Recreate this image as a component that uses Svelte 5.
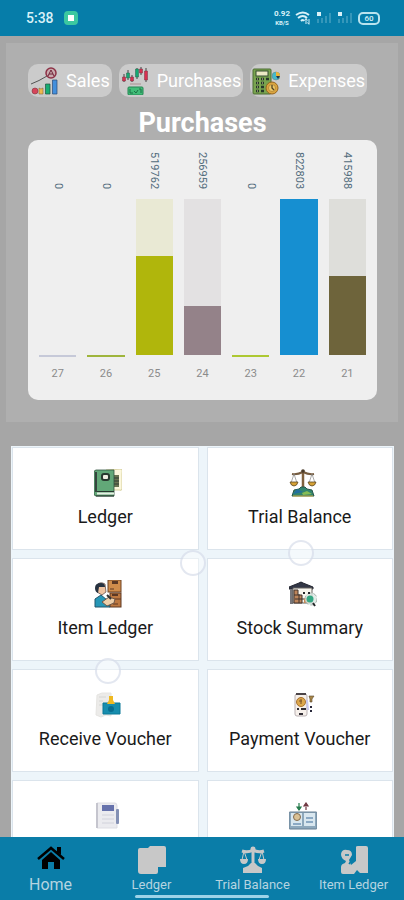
<script lang="ts">
    interface Day {
        label: string;
        value: number;
        color: string;
        track: string;
    }

    interface Entry {
        title: string;
        icon: string;
        iconOnly?: boolean;
    }

    const filters: Entry[] = [
        { title: "Sales", icon: "sales" },
        { title: "Purchases", icon: "purchases" },
        { title: "Expenses", icon: "expenses" },
    ];

    const days: Day[] = [
        { label: "27", value: 0, color: "#c6c9d8", track: "transparent" },
        { label: "26", value: 0, color: "#9fb53c", track: "transparent" },
        { label: "25", value: 519762, color: "#b0b60c", track: "#e9e9d4" },
        { label: "24", value: 256959, color: "#948289", track: "#e3e1e2" },
        { label: "23", value: 0, color: "#adc832", track: "transparent" },
        { label: "22", value: 822803, color: "#168fd1", track: "#d3e4ee" },
        { label: "21", value: 415988, color: "#6e643b", track: "#dededa" },
    ];

    const tiles: Entry[] = [
        { title: "Ledger", icon: "ledger" },
        { title: "Trial Balance", icon: "balance" },
        { title: "Item Ledger", icon: "items" },
        { title: "Stock Summary", icon: "stock" },
        { title: "Receive Voucher", icon: "receive" },
        { title: "Payment Voucher", icon: "payment" },
        { title: "Journal", icon: "journal", iconOnly: true },
        { title: "Cash Book", icon: "cashbook", iconOnly: true },
    ];

    const tabs: Entry[] = [
        { title: "Home", icon: "tab-home" },
        { title: "Ledger", icon: "tab-ledger" },
        { title: "Trial Balance", icon: "tab-balance" },
        { title: "Item Ledger", icon: "tab-items" },
    ];

    const max = Math.max(...days.map((day) => day.value));

    let selected = $state("Purchases");
    let activeTab = $state("Home");
</script>

{#snippet icon(name: string)}
    <svg class="icon" viewBox="0 0 28 28" aria-hidden="true">
        {#if name === "sales"}
            <path d="M1 17 Q9 14 17 9" fill="none" stroke="#555" />
            <circle cx="21" cy="6" r="5" fill="#c9a9ad" stroke="#8d3146" stroke-width="1.5" />
            <path d="M18 9 L21 3 L24 9 M19 7 H23" fill="none" stroke="#6f2438" />
            <circle cx="5" cy="24" r="3" fill="#d6455a" stroke="#7d3540" stroke-width=".6" />
            <path d="M9 21 l2 1 2-1 v6 h-4z" fill="#edb94d" stroke="#8d6a39" stroke-width=".6" />
            <path d="M15.500 17 h4.500 v10 h-4.500z" fill="#18ad73" stroke="#22523f" stroke-width=".7" />
            <path d="M22.500 13 h4.500 v14 h-4.500z" fill="#438fdc" stroke="#2c4b75" stroke-width=".7" />
        {:else if name === "purchases"}
            <path d="M3 7 v8 M7 3 v10 M11 8 v7 M16 1 v11 M20 0 v8 M25 1 v14" stroke="#444" />
            <path d="M1.500 10 h3 v4 h-3z M9.500 10 h3 v4 h-3z M18.500 2 h3 v4 h-3z M23.500 4 h3 v9 h-3z" fill="#d82f50" stroke="#763241" stroke-width=".5" />
            <path d="M5.500 6 h3 v5 h-3z M14.500 2 h3 v8 h-3z" fill="#15a873" stroke="#286049" stroke-width=".5" />
            <path d="M9 17 h11" stroke="#b5a5a5" stroke-width="1.500" />
            <rect x="7" y="20" width="15" height="8" rx="1" fill="#41bd78" stroke="#258552" />
            <path d="M9 22 v4 h3 M13 24 l2 2 2-3 M18 22 h2 v4" fill="none" stroke="#1d7046" />
        {:else if name === "expenses"}
            <rect x="1" y="2" width="18" height="25" rx="1" fill="#79a44f" stroke="#4d6c35" />
            <rect x="4" y="4" width="12" height="5" fill="#ece9c5" stroke="#344d30" />
            <path d="M4 12 h3 M9 12 h3 M14 12 h3 M4 16 h3 M9 16 h3 M4 20 h3 M9 20 h3 M4 24 h3 M9 24 h3" stroke="#26382a" stroke-width="2.500" />
            <path d="M5 12 h1 M10 12 h1 M5 16 h1 M10 16 h1 M5 20 h1 M5 24 h1" stroke="#e5d8a8" />
            <circle cx="24" cy="9" r="4" fill="#45b9ca" stroke="#67807e" stroke-width=".5" />
            <path d="M24 9 V5 A4 4 0 0 1 28 9z" fill="#edb437" />
            <path d="M24 9 h4 l-2 3z" fill="#263748" />
            <circle cx="20" cy="21" r="6" fill="#dba640" stroke="#97651f" />
            <circle cx="20" cy="21" r="3.500" fill="#edc869" stroke="#a0712a" stroke-width=".6" />
            <path d="M20 18 v3 l2 2" fill="none" stroke="#4e4223" stroke-width="1.300" />
        {:else if name === "ledger"}
            <path d="M12 1 L27 0 Q29 1 28 5 V20 Q28 22 25 21 H19 V3 H12z" fill="#fbf7dc" stroke="#d6cf9e" />
            <path d="M20 6 h5 v12 h-5z" fill="#6a7350" />
            <path d="M20 9 h5 M20 12 h5 M20 15 h5" stroke="#2e3d35" />
            <path d="M2 1 H20 V27 H2 Q0 27 0 24 V4 Q0 1 2 1z" fill="#62a878" stroke="#31533f" stroke-width=".8" />
            <path d="M1 3 h2 v20 h-2z" fill="#35463e" />
            <path d="M3 24.500 H20" stroke="#e8efe5" stroke-width="2" />
            <path d="M3 22.500 H20 M2 27 H20" stroke="#27372f" />
            <rect x="7" y="4" width="9" height="8" rx="3" fill="#29392f" />
            <rect x="9" y="6" width="5" height="4" rx="1" fill="#f0eee2" />
        {:else if name === "balance"}
            <path d="M14 1 V20" stroke="#80613e" stroke-width="2.500" />
            <path d="M3 5 Q8 6 14 3 Q20 6 25 5" fill="none" stroke="#765c40" stroke-width="2" />
            <path d="M5 5 L2 14 M5 5 L8 14 M23 5 L20 14 M23 5 L26 14" stroke="#878787" stroke-width=".7" />
            <path d="M1 13 H9 Q8 17 5 17 Q2 17 1 13z M19 13 H27 Q26 17 23 17 Q20 17 19 13z" fill="#d6a236" stroke="#5b4625" stroke-width=".8" />
            <path d="M10 20 L12 18 H16 L18 20 L23 21 L25 27 H3 L5 21z" fill="#32846e" stroke="#28584a" />
            <path d="M8 20 l6 3 -10 2z" fill="#226e9e" />
            <path d="M13 24 l5-2 5 3 -9 1z" fill="#86bd55" />
            <path d="M4 27 H24" stroke="#cfb64b" />
            <circle cx="14" cy="2" r="1.800" fill="#493a29" />
        {:else if name === "items"}
            <rect x="14" y="0" width="13" height="12" fill="#cf8c4b" stroke="#6e4325" />
            <rect x="16" y="13" width="11" height="14" fill="#bd7840" stroke="#5d3923" />
            <path d="M18 1 h6 v3 h-6z M18 14 h6 v2 h-6z" fill="#5b3824" />
            <path d="M16 9 h4 M18 19 h9 M19 24 h5" stroke="#5f3924" />
            <path d="M3 5 Q6 1 11 4 L12 12 L8 15 L3 12z" fill="#efc3a0" stroke="#53413d" stroke-width=".7" />
            <path d="M1 8 Q1 3 7 3 Q11 3 11 7 L5 7 L4 13 Q1 12 1 8z" fill="#263240" />
            <path d="M1 27 V19 L7 15 L13 20 L16 27z" fill="#2697b7" stroke="#23566c" />
            <path d="M8 22 L15 17 L21 19 L20 23 L13 26z" fill="#edcfaa" stroke="#6f5747" />
            <path d="M13 15 l4 4" stroke="#333" stroke-width="2" />
        {:else if name === "stock"}
            <path d="M0 9 V7 L10 3 Q12 1 14 3 L24 7 V9z" fill="#323746" stroke="#242630" />
            <path d="M1 9 H4 V24 H1z" fill="#77767a" />
            <path d="M4 8 H23 V23 H4z" fill="#f9f7ef" stroke="#65625f" />
            <path d="M5 10 h4 v5 h4 v8 h-8z" fill="#bd855b" stroke="#43332d" />
            <path d="M5 15 h6 M6 19 h10 M10 16 v7" stroke="#403531" />
            <path d="M15 18 h5 v5 h-5z" fill="#ca8b57" />
            <circle cx="22" cy="19" r="6" fill="#dce9e3" fill-opacity=".8" stroke="#a9b3ae" stroke-dasharray="4 2" />
            <circle cx="21" cy="19" r="3.500" fill="#35a783" />
            <path d="M14 13 h2 M19 13 h2 M24 23 l2 3" stroke="#24282a" stroke-width="2" />
        {:else if name === "receive"}
            <path d="M3 4 L8 2 H17 V25 L12 24 L7 26 L2 24z" fill="#ecebe9" stroke="#e6e5e2" />
            <path d="M5 6 h7 M5 10 h4 M5 14 h4" stroke="#d6d6d3" />
            <path d="M9 12 H26 V23 H9z" fill="#178dae" stroke="#0a7897" />
            <circle cx="17" cy="18" r="3" fill="#086d8f" />
            <path d="M15 5 H19 V9 L21 13 H13 L15 9z" fill="#efb922" />
        {:else if name === "payment"}
            <rect x="6" y="3" width="12" height="22" rx="2" fill="#f6f0eb" stroke="#b9b0b2" />
            <path d="M7 3 h10" stroke="#4c4548" stroke-width="2" />
            <circle cx="12" cy="11" r="4.500" fill="#dda84c" stroke="#a87332" />
            <path d="M12 8 v5 M10 10 h3" stroke="#795126" />
            <path d="M8 18 h2 M12 18 h5 M10 23 h4" stroke="#332f37" stroke-width="2" />
            <path d="M20 5 H25 L23 8 V11 H21 V8z" fill="#a88748" stroke="#5a472c" stroke-width=".6" />
            <path d="M18 9 l1 10" stroke="#c7c7ee" stroke-width="2" />
            <path d="M22 15 v2 M22 19 v2" stroke="#29293b" stroke-width="2" />
        {:else if name === "journal"}
            <path d="M3 1 H21 Q23 1 23 4 V26 H3z" fill="#ebebef" stroke="#dddde3" />
            <path d="M3 1 v25" stroke="#c5c5ce" stroke-width="2" />
            <rect x="8" y="3" width="12" height="6" fill="#6672ac" />
            <path d="M8 13 h12 M8 17 h12 M8 21 h12" stroke="#d1d2db" />
            <rect x="22" y="7" width="3" height="15" rx="1" fill="#8390b4" />
        {:else if name === "cashbook"}
            <rect x="0" y="10" width="28" height="17" rx="1" fill="#8da8bc" stroke="#677e92" />
            <path d="M2 11 H13 V24 H2z M15 11 H26 V24 H15z" fill="#d9e7ef" />
            <circle cx="8" cy="15" r="3.500" fill="#dac194" stroke="#836b4d" />
            <path d="M4 22 h8 M17 16 h7 M17 20 h7" stroke="#7195b6" stroke-width="1.500" />
            <path d="M10 1 v4 M8 5 h4 l-2 3z" fill="#257b4c" stroke="#257b4c" stroke-width="1.200" />
            <path d="M17 8 v-3 M15 4 h4 l-2-3z" fill="#713843" stroke="#713843" stroke-width="1.200" />
        {:else if name === "tab-home"}
            <path d="M1 13 L14 2 L27 13" fill="none" stroke="currentColor" stroke-width="2.500" />
            <path d="M20 1 H24 V9 L20 6z" fill="currentColor" />
            <path d="M5 14 L14 6 L23 14 V23 H17 V16 H11 V23 H5z" fill="currentColor" />
        {:else if name === "tab-ledger"}
            <path d="M2 2 H10 L12 0 H26 Q28 0 28 2 V21 H20 V26 Q20 28 18 28 H3 Q0 28 0 25 V4 Q0 2 2 2z" fill="currentColor" />
        {:else if name === "tab-balance"}
            <path d="M14 1 V20 M3 5 Q9 7 14 4 Q19 7 25 5" fill="none" stroke="currentColor" stroke-width="3" />
            <path d="M5 5 L3 14 M5 5 L8 14 M23 5 L20 14 M23 5 L25 14" stroke="currentColor" />
            <path d="M1 13 H9 Q9 18 5 18 Q1 18 1 13z M19 13 H27 Q27 18 23 18 Q19 18 19 13z M9 20 L12 17 H16 L19 20 L23 22 V27 H4 V22z" fill="currentColor" />
            <circle cx="14" cy="3" r="2.500" fill="currentColor" />
        {:else if name === "tab-items"}
            <path d="M16 1 Q16 0 18 0 H26 Q28 0 28 2 V27 H20 L17 24 L14 28 H3 Q1 28 1 26 V21 Q1 18 5 17 L6 15 Q1 13 1 8 Q2 3 7 4 Q12 4 12 9 L9 14 L11 19 L16 15z" fill="currentColor" />
            <path d="M14 11 L9 18 M5 9 h4" stroke="#0a7da8" stroke-width="1.500" />
        {/if}
    </svg>
{/snippet}

<div class="app">
    <header class="status">
        <time>5:38</time>
        <span class="status__app"></span>
        <span class="status__speed">
            <span>0.92</span>
            <small>KB/S</small>
        </span>
        <svg class="status__wifi" viewBox="0 0 16 14" aria-hidden="true">
            <path d="M1 4 Q8 -1 14 4 M3 7 Q8 3 12 7 M6 10 Q8 8 9 10" fill="none" stroke="currentColor" stroke-width="2" />
            <path d="M11 13 V8 M9.500 9.500 L11 7.500 L12.500 9.500 M14 8 V13 M12.500 11.500 L14 13.500" fill="none" stroke="currentColor" />
        </svg>
        {#each [1, 2] as sim (sim)}
            <svg class="status__signal" viewBox="0 0 16 14" aria-hidden="true">
                <rect x="1" y="1" width="4" height="4" fill="currentColor" />
                <path d="M2 8 v4 M6 7 v5 M10 5 v7 M14 2 v10" stroke="currentColor" stroke-width="1.500" opacity=".3" />
            </svg>
        {/each}
        <span class="status__battery">60</span>
    </header>

    <main class="content">
        <section class="panel">
            <div class="filters">
                {#each filters as filter (filter.title)}
                    <button
                        class="filter"
                        aria-pressed={selected === filter.title}
                        onclick={() => (selected = filter.title)}
                    >
                        {@render icon(filter.icon)}
                        {filter.title}
                    </button>
                {/each}
            </div>
            <h1>{selected}</h1>
            <div class="chart">
                {#each days as day (day.label)}
                    <div class="day">
                        <span class="day__value">{day.value}</span>
                        <div
                            class="day__track"
                            style="background-color: {day.track}; border-color: {day.value
                                ? 'transparent'
                                : day.color}"
                        >
                            <div
                                class="day__bar"
                                style="height: {(day.value / max) * 100}%; background: {day.color}"
                            ></div>
                        </div>
                        <span class="day__label">{day.label}</span>
                    </div>
                {/each}
            </div>
        </section>

        <section class="tiles">
            {#each tiles as tile (tile.title)}
                <button class="tile" aria-label={tile.title}>
                    {@render icon(tile.icon)}
                    {#if !tile.iconOnly}
                        <span>{tile.title}</span>
                    {/if}
                </button>
            {/each}
            <span class="bubble bubble--middle"></span>
            <span class="bubble bubble--right"></span>
            <span class="bubble bubble--left"></span>
        </section>
    </main>

    <nav class="tabs">
        {#each tabs as tab (tab.title)}
            <a
                class="tab"
                class:tab--active={activeTab === tab.title}
                href="#{tab.icon}"
                onclick={() => (activeTab = tab.title)}
            >
                {@render icon(tab.icon)}
                <span>{tab.title}</span>
            </a>
        {/each}
        <span class="gesture"></span>
    </nav>
</div>

<style>
    :global(body) {
        margin: 0;
    }
    .app {
        display: flex;
        flex-direction: column;
        height: 100vh;
        background: #a6a6a6;
        font-family: Roboto, "Liberation Sans", sans-serif;
    }
    button {
        border: 0;
        padding: 0;
        font: inherit;
        cursor: pointer;
    }
    .icon {
        display: block;
        flex: none;
        width: 28px;
        height: 28px;
    }

    /* Status bar */
    .status {
        display: flex;
        flex: none;
        align-items: center;
        gap: 5px;
        box-sizing: border-box;
        height: 36px;
        padding: 0 24px 0 26px;
        background: #067da9;
        color: #d8f1f8;
        font-size: 14px;
        font-weight: 500;
    }
    .status__app {
        width: 6px;
        height: 6px;
        margin: 0 auto 0 5px;
        border: 4px solid #3cc8a0;
        border-radius: 4px;
        background: #fff;
    }
    .status__speed {
        display: flex;
        flex-direction: column;
        align-items: center;
        font-size: 8px;
        font-weight: 700;
        line-height: 10px;
    }
    .status__speed small {
        font-size: 6px;
        line-height: 8px;
    }
    .status__wifi,
    .status__signal {
        width: 16px;
        height: 14px;
    }
    .status__battery {
        box-sizing: border-box;
        width: 22px;
        border: 2px solid #b9e3ee;
        border-radius: 5px;
        font-size: 8px;
        line-height: 9px;
        text-align: center;
    }

    /* Chart panel */
    .content {
        flex: 1;
        min-height: 0;
        overflow-y: auto;
        scrollbar-width: none;
    }
    .panel {
        margin: 7px 6px 24px;
        padding: 21px 21px 22px 22px;
        background: #afafaf;
    }
    .filters {
        display: flex;
        gap: 7px;
    }
    .filter {
        display: flex;
        align-items: center;
        gap: 8px;
        height: 33px;
        padding: 0 2px;
        border-radius: 10px;
        background: #cbcbcb;
        color: #fff;
        font-size: 18px;
    }
    h1 {
        margin: 11px 0 2px;
        color: #fff;
        font-size: 27px;
        font-weight: 700;
        line-height: 30px;
        text-align: center;
    }
    .chart {
        display: flex;
        gap: 11px;
        padding: 11px 11px 18px;
        border-radius: 10px;
        background: #efefef;
    }
    .day {
        display: flex;
        flex: 1;
        flex-direction: column;
        align-items: center;
    }
    .day__value {
        height: 38px;
        color: #526c7c;
        font-size: 11px;
        line-height: 14px;
        text-align: right;
        writing-mode: vertical-rl;
    }
    .day__track {
        display: flex;
        align-items: flex-end;
        width: 100%;
        height: 156px;
        margin: 10px 0 8px;
        border-bottom: 2px solid transparent;
        background-clip: padding-box;
    }
    .day__bar {
        width: 100%;
    }
    .day__label {
        color: #8b8b8b;
        font-size: 11px;
        line-height: 17px;
    }

    /* Shortcut tiles */
    .tiles {
        position: relative;
        display: grid;
        grid-template-columns: 1fr 1fr;
        gap: 8px;
        margin: 0 10px 0 11px;
        padding: 1px;
        background: #edf5fa;
    }
    .tile {
        display: flex;
        flex-direction: column;
        align-items: center;
        gap: 8px;
        box-sizing: border-box;
        height: 103px;
        padding-top: 21px;
        border: 1px solid #dbe4ec;
        background: #fff;
        color: #1a1a1a;
        font-size: 18px;
        line-height: 24px;
    }
    .tile .icon {
        margin-left: 6px;
    }
    .bubble {
        position: absolute;
        box-sizing: border-box;
        width: 26px;
        height: 26px;
        border: 2px solid rgba(200, 208, 225, 0.5);
        border-radius: 50%;
        background: rgba(255, 255, 255, 0.4);
        pointer-events: none;
    }
    .bubble--middle {
        top: 104px;
        left: 44%;
    }
    .bubble--right {
        top: 94px;
        right: 21%;
    }
    .bubble--left {
        top: 212px;
        left: 22%;
    }

    /* Bottom navigation */
    .tabs {
        position: relative;
        display: flex;
        flex: none;
        box-sizing: border-box;
        height: 63px;
        padding-top: 9px;
        background: #0a7da8;
    }
    .tab {
        display: flex;
        flex: 1;
        flex-direction: column;
        align-items: center;
        gap: 2px;
        color: #c8c8c8;
        font-size: 13px;
        line-height: 18px;
        text-decoration: none;
        white-space: nowrap;
    }
    .tab span {
        color: #b5d4e0;
    }
    .tab--active {
        color: #000;
        font-size: 16px;
    }
    .gesture {
        position: absolute;
        bottom: 2px;
        left: 50%;
        width: 134px;
        height: 3px;
        border-radius: 2px;
        background: #9dd3e8;
        transform: translateX(-50%);
    }
</style>
